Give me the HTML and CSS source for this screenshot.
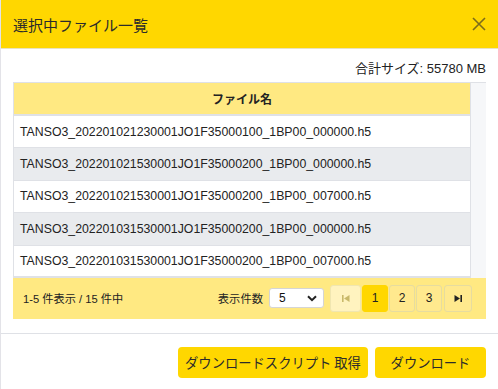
FILE: index.html
```html
<!DOCTYPE html>
<html lang="ja">
<head>
<meta charset="utf-8">
<link rel="stylesheet" href="styles.css">
</head>
<body>
<div class="modal">
  <div class="modal-header">
    <h1 class="modal-title">選択中ファイル一覧</h1>
    <button class="close" aria-label="close">
      <svg width="14" height="14" viewBox="0 0 14 14"><path d="M1 1L13 13M13 1L1 13" stroke="#7d6c1a" stroke-width="1.6" fill="none"/></svg>
    </button>
  </div>
  <div class="modal-body">
    <div class="total">合計サイズ: 55780 MB</div>
    <div class="grid">
      <div class="grid-main">
        <div class="grid-head">ファイル名</div>
        <div class="row">TANSO3_202201021230001JO1F35000100_1BP00_000000.h5</div>
        <div class="row alt">TANSO3_202201021530001JO1F35000200_1BP00_000000.h5</div>
        <div class="row">TANSO3_202201021530001JO1F35000200_1BP00_007000.h5</div>
        <div class="row alt">TANSO3_202201031530001JO1F35000200_1BP00_000000.h5</div>
        <div class="row">TANSO3_202201031530001JO1F35000200_1BP00_007000.h5</div>
      </div>
      <div class="gutter"></div>
    </div>
    <div class="pager-bar">
      <div class="count">1-5 件表示 / 15 件中</div>
      <div class="pager-right">
        <span class="per-label">表示件数</span>
        <div class="select"><span>5</span>
          <svg width="10" height="7" viewBox="0 0 10 7"><path d="M1 1.2L5 5.2L9 1.2" stroke="#222" stroke-width="2" fill="none"/></svg>
        </div>
        <div class="pages">
          <button class="pg disabled"><svg width="8" height="7" viewBox="0 0 8 7"><rect x="0" y="0" width="1.6" height="7" fill="#c9b96a"/><path d="M7.5 0L2 3.5L7.5 7Z" fill="#c9b96a"/></svg></button>
          <button class="pg active">1</button>
          <button class="pg">2</button>
          <button class="pg">3</button>
          <button class="pg last"><svg width="8" height="7" viewBox="0 0 8 7"><path d="M0.5 0L6 3.5L0.5 7Z" fill="#222"/><rect x="6.4" y="0" width="1.6" height="7" fill="#222"/></svg></button>
        </div>
      </div>
    </div>
  </div>
  <div class="modal-footer">
    <button class="btn btn-script">ダウンロードスクリプト 取得</button>
    <button class="btn btn-dl">ダウンロード</button>
  </div>
</div>
</body>
</html>
```
FILE: styles.css
```css
* { box-sizing: border-box; }
html, body { margin: 0; padding: 0; background: #fff; }
body {
  font-family: "Liberation Sans", Arial, "Noto Sans CJK JP", sans-serif;
  color: #212529;
  width: 498px;
  height: 389px;
  overflow: hidden;
}
.modal {
  width: 498px;
  height: 389px;
  border-left: 1px solid #e3e3e8;
  display: flex;
  flex-direction: column;
}
.modal-header {
  height: 49px;
  flex: none;
  background: #ffd700;
  display: flex;
  align-items: center;
  justify-content: space-between;
  padding: 0 12px 0 12px;
  border-bottom: 1px solid #e8e3c0;
}
.modal-title {
  margin: 0;
  font-size: 15px;
  font-weight: normal;
  color: #2b2b2b;
  font-family: "Noto Sans CJK JP", sans-serif;
}
.close {
  border: 0;
  background: transparent;
  padding: 0;
  width: 14px;
  height: 14px;
  display: flex;
}
.modal-body {
  padding: 12px 12px 0 12px;
}
.total {
  text-align: right;
  font-size: 13px;
  line-height: 16px;
  height: 21px;
  color: #222;
}
.grid {
  display: flex;
  border-top: 1px solid #dfe1e6;
}
.grid-main {
  flex: 1;
  border-left: 1px solid #dfe1e6;
  border-right: 1px solid #dfe1e6;
}
.gutter {
  width: 15px;
  background: #f6f7f9;
}
.grid-head {
  height: 33px;
  background: #ffe982;
  display: flex;
  align-items: center;
  justify-content: center;
  font-size: 12px;
  font-weight: bold;
  color: #222;
  font-family: "Noto Sans CJK JP", sans-serif;
  border-bottom: 2px solid #dfe1e6;
}
.row {
  height: 32.4px;
  display: flex;
  align-items: center;
  padding-left: 6px;
  font-size: 12.3px;
  color: #222;
  border-bottom: 1px solid #dfe1e6;
  background: #fff;
}
.row.alt { background: #e9ebee; }
.row:last-child { border-bottom: 2px solid #dfe1e6; }
.pager-bar {
  height: 41px;
  background: #ffe982;
  display: flex;
  align-items: center;
  justify-content: space-between;
  padding: 0 14px 0 10px;
}
.count {
  font-size: 11.2px;
  color: #222;
}
.pager-right {
  display: flex;
  align-items: center;
}
.per-label {
  font-size: 11.3px;
  color: #222;
  margin-right: 6px;
}
.select {
  width: 55px;
  height: 20px;
  background: #fff;
  border: 1px solid #d5d5d5;
  border-radius: 3px;
  display: flex;
  align-items: center;
  justify-content: space-between;
  padding: 0 6px 0 9px;
  font-size: 12px;
  color: #111;
  margin-right: 6px;
}
.pages {
  display: flex;
  gap: 1px;
}
.pg {
  width: 26px;
  height: 27px;
  border: 1px solid #e6dca0;
  background: #ffe98e;
  border-radius: 3px;
  font-size: 12px;
  font-family: "Liberation Sans", Arial, sans-serif;
  color: #222;
  padding: 0;
  display: flex;
  align-items: center;
  justify-content: center;
}
.pg.disabled {
  width: 31px;
  background: #fff3bf;
  border-color: #f0e6b0;
}
.pg.active {
  background: #ffd700;
  border-color: #ffd700;
}
.pg.last { width: 28px; margin-left: 1px; }
.modal-footer {
  margin-top: 14px;
  border-top: 1px solid #dfe1e6;
  display: flex;
  justify-content: flex-end;
  gap: 7px;
  padding: 13px 12px 0 0;
}
.btn {
  height: 31px;
  background: #ffd700;
  border: 0;
  border-radius: 4px;
  font-family: "Noto Sans CJK JP", sans-serif;
  font-size: 13.3px;
  color: #2b2b2b;
  padding: 0;
  white-space: nowrap;
}
.btn-script { width: 190px; }
.btn-dl { width: 111px; }
```
